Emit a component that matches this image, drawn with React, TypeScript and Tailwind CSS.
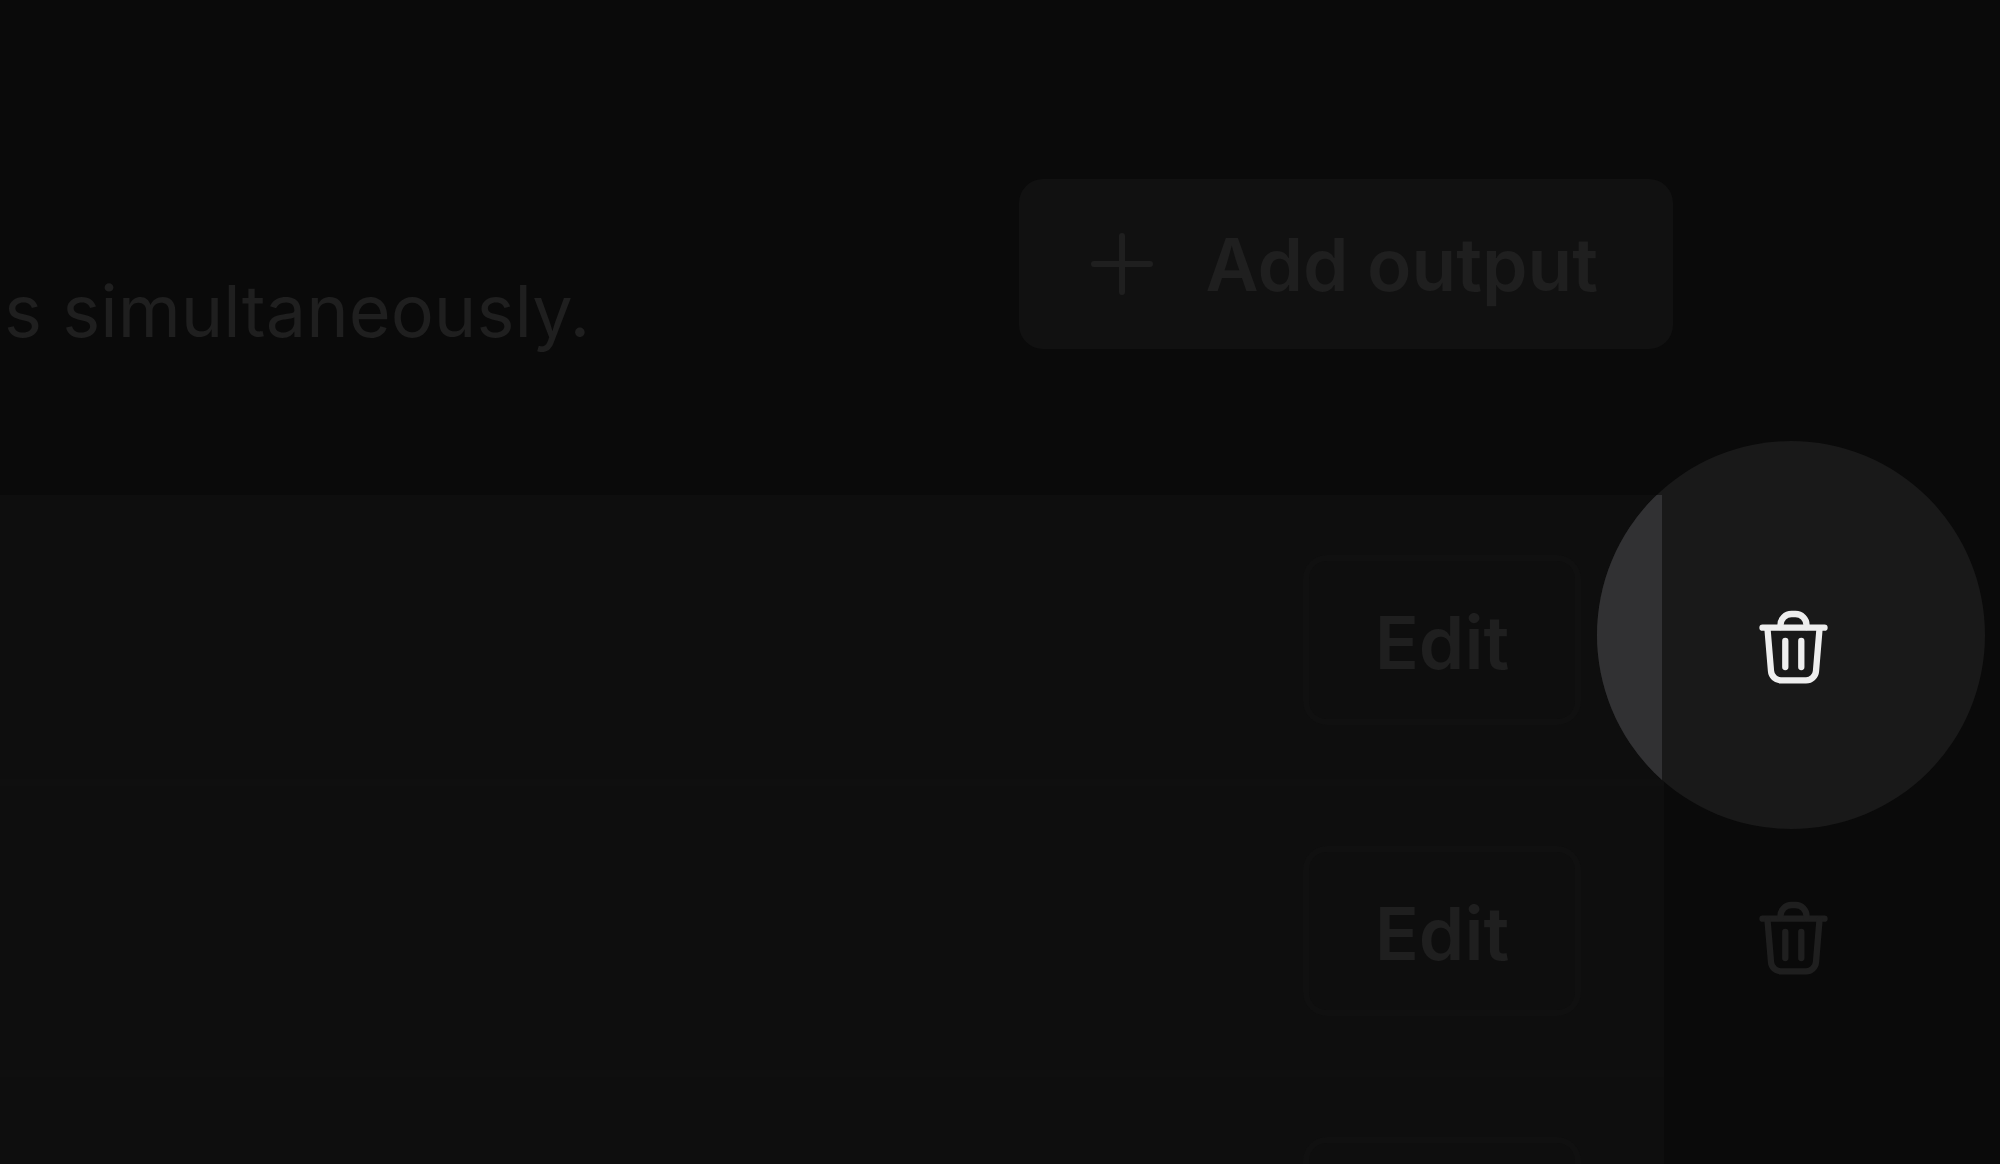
import React from 'react';

interface Output {
  id: number;
  action: string;
  spotlight: boolean;
}

const outputs: Output[] = [
  { id: 1, action: 'Edit', spotlight: true },
  { id: 2, action: 'Edit', spotlight: false },
  { id: 3, action: '', spotlight: false },
];

function TrashIcon() {
  return (
    <svg
      viewBox="19 19 69 75"
      className="block h-[75px] w-[69px]"
      fill="none"
      stroke="currentColor"
      strokeWidth="6.3"
      strokeLinecap="round"
      strokeLinejoin="round"
      aria-hidden="true"
    >
      <path d="M22.5 36.7H84.5" />
      <path d="M40.5 36V34A11 11 0 0 1 51.5 23H55.5A11 11 0 0 1 66.5 34V36" />
      <path d="M27.5 38L31 80A10 10 0 0 0 41 89.3H66A10 10 0 0 0 76 80L79.5 38" />
      <path d="M45.3 50V76M61.3 50V76" />
    </svg>
  );
}

function PlusIcon() {
  return (
    <svg
      viewBox="0 0 64 64"
      className="block size-16 shrink-0"
      fill="none"
      stroke="currentColor"
      strokeWidth="6"
      strokeLinecap="round"
      aria-hidden="true"
    >
      <path d="M32 4V60M4 32H60" />
    </svg>
  );
}

// Bright circle around the delete action, with the lit part of the row inside it
function Spotlight() {
  return (
    <div className="absolute -left-[67px] -top-[54px] size-[388px] overflow-hidden rounded-full bg-[#191919]">
      <div className="mt-[54px] h-[286px] w-[65px] bg-[#313133]" />
    </div>
  );
}

function OutputRow({ output }: { output: Output }) {
  return (
    <li className="flex">
      <div className="flex flex-1 justify-end border-b-[7px] border-[#0f0f0f] bg-[#0e0e0e] pb-[54px] pr-[83px] pt-[60px]">
        <button
          type="button"
          aria-label="Edit output"
          className="h-[170px] w-[278px] rounded-3xl border-[6px] border-[#101010] pt-1 text-[73px] font-semibold leading-none"
        >
          {output.action}
        </button>
      </div>
      <div className="relative w-[336px] pl-[95px] pt-[115px]">
        {output.spotlight && <Spotlight />}
        <button
          type="button"
          aria-label="Delete output"
          className={`relative block ${output.spotlight ? 'text-[#eeeeee]' : 'text-[#1f1f1f]'}`}
        >
          <TrashIcon />
        </button>
      </div>
    </li>
  );
}

export default function App() {
  return (
    <main className="h-screen overflow-hidden bg-[#0a0a0a] font-['Inter',sans-serif] text-[#1f1f1f]">
      <header className="flex items-start justify-between pb-[142px] pl-1 pr-[327px] pt-[179px]">
        <p className="whitespace-nowrap pt-[90px] text-[72px] leading-[84px]">s simultaneously.</p>
        <button
          type="button"
          className="flex h-[170px] items-center gap-[52px] whitespace-nowrap rounded-3xl bg-[#111111] pl-[71px] pr-[75px] text-[73px] font-semibold leading-none"
        >
          <PlusIcon />
          Add output
        </button>
      </header>
      <ul>
        {outputs.map(output => (
          <OutputRow key={output.id} output={output} />
        ))}
      </ul>
    </main>
  );
}
